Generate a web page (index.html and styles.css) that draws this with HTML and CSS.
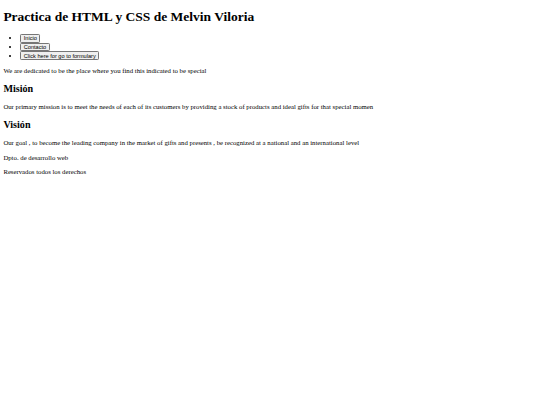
FILE: index.html
```html
<!DOCTYPE html>
<html lang="es">
<head>
<meta charset="utf-8">
<title>Practica de HTML y CSS</title>
<link rel="stylesheet" href="styles.css">
</head>
<body class="page">
<header class="header">
<h1 class="title">Practica de HTML y CSS de Melvin Viloria</h1>
<nav>
<ul class="menu">
<li class="menu-item"><button class="btn">Inicio</button></li>
<li class="menu-item"><button class="btn">Contacto</button></li>
<li class="menu-item"><button class="btn">Click here for go to formulary</button></li>
</ul>
</nav>
</header>
<main>
<p class="text">We are dedicated to be the place where you find this indicated to be special</p>
<h2 class="subtitle">Misión</h2>
<p class="text">Our primary mission is to meet the needs of each of its customers by providing a stock of products and ideal gifts for that special momen</p>
<h2 class="subtitle">Visión</h2>
<p class="text">Our goal , to become the leading company in the market of gifts and presents , be recognized at a national and an international level</p>
</main>
<footer>
<p class="text">Dpto. de desarrollo web</p>
<p class="text">Reservados todos los derechos</p>
</footer>
</body>
</html>
```
FILE: styles.css
```css
html { background: #fff; }
.page {
  margin: 3.375px;
  font-family: "Liberation Serif", "Times New Roman", serif;
  font-size: 6.75px;
  color: #000;
}
.title {
  font-size: 13.5px;
  font-weight: bold;
  margin: 6px 0 8.5px;
}
.menu {
  margin: 6px 0;
  padding-left: 16.875px;
  list-style: disc;
}
.menu-item {
  height: 8.75px;
}
.btn {
  font-family: "Liberation Sans", Arial, sans-serif;
  font-size: 5.625px;
  padding: 0.42px 2.53px;
  border: 0.84px solid #767676;
  border-radius: 1.27px;
  background: #efefef;
  color: #000;
  margin: 0;
}
.text {
  margin: 7.2px 0;
}
.subtitle {
  font-size: 10.125px;
  font-weight: bold;
  margin: 9px 0;
}
```
